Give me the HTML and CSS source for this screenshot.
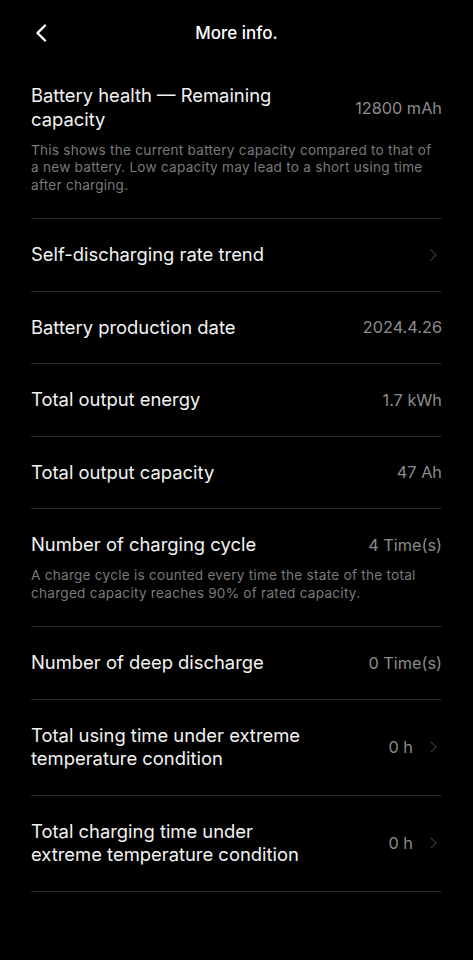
FILE: index.html
```html
<!DOCTYPE html>
<html lang="en">
<head>
    <meta charset="UTF-8">
    <meta name="viewport" content="width=device-width, initial-scale=1.0">
    <title>More info.</title>
    <link rel="stylesheet" href="styles.css">
</head>
<body>

<div class="page">
    <div class="header">
        <span class="back">
            <svg width="14" height="18" viewBox="0 0 14 18"><path d="M11 1.5 L3.5 9 L11 16.5" fill="none" stroke="#fff" stroke-width="2.4" stroke-linecap="round" stroke-linejoin="round"/></svg>
        </span>
        <h1>More info.</h1>
    </div>

    <div class="list">
        <div class="row">
            <div class="row-main">
                <div class="title short">Battery health — Remaining capacity</div>
                <div class="value">12800 mAh</div>
            </div>
            <p class="desc">This shows the current battery capacity compared to that of a new battery. Low capacity may lead to a short using time after charging.</p>
        </div>

        <div class="row">
            <div class="row-main">
                <div class="title">Self-discharging rate trend</div>
                <div class="value"><span class="chev"></span></div>
            </div>
        </div>

        <div class="row">
            <div class="row-main">
                <div class="title">Battery production date</div>
                <div class="value">2024.4.26</div>
            </div>
        </div>

        <div class="row">
            <div class="row-main">
                <div class="title">Total output energy</div>
                <div class="value">1.7 kWh</div>
            </div>
        </div>

        <div class="row">
            <div class="row-main">
                <div class="title">Total output capacity</div>
                <div class="value">47 Ah</div>
            </div>
        </div>

        <div class="row">
            <div class="row-main">
                <div class="title">Number of charging cycle</div>
                <div class="value">4 Time(s)</div>
            </div>
            <p class="desc">A charge cycle is counted every time the state of the total charged capacity reaches 90% of rated capacity.</p>
        </div>

        <div class="row">
            <div class="row-main">
                <div class="title">Number of deep discharge</div>
                <div class="value">0 Time(s)</div>
            </div>
        </div>

        <div class="row">
            <div class="row-main">
                <div class="title narrow">Total using time under extreme temperature condition</div>
                <div class="value">0 h <span class="chev"></span></div>
            </div>
        </div>

        <div class="row">
            <div class="row-main">
                <div class="title narrow">Total charging time under extreme temperature condition</div>
                <div class="value">0 h <span class="chev"></span></div>
            </div>
        </div>
    </div>
</div>

</body>
</html>
```

FILE: styles.css
```css
* {
    margin: 0;
    padding: 0;
    box-sizing: border-box;
}

body {
    font-family: Inter, 'Noto Sans', sans-serif;
    background-color: #000;
    color: #f2f2f2;
}

.page {
    width: 473px;
    min-height: 960px;
}

.header {
    height: 60px;
    display: flex;
    align-items: center;
    justify-content: center;
    position: relative;
    padding-top: 6px;
}

.header h1 {
    font-size: 17px;
    font-weight: 500;
    color: #fff;
}

.back {
    position: absolute;
    left: 34px;
    top: 24px;
    display: flex;
}

.list {
    padding: 0 31px;
}

.row {
    padding: 24px 0;
    border-bottom: 1px solid #262626;
}

.row-main {
    display: flex;
    align-items: center;
    justify-content: space-between;
    gap: 16px;
}

.title {
    font-size: 18.4px;
    line-height: 23.5px;
    color: #f2f2f2;
}

.title.short {
    max-width: 260px;
}

.title.narrow {
    max-width: 290px;
}

.value {
    font-size: 16.3px;
    color: #8c8c8c;
    white-space: nowrap;
    display: flex;
    align-items: center;
}

.chev {
    display: inline-block;
    width: 8px;
    height: 8px;
    border-top: 1.6px solid #3c3c3c;
    border-right: 1.6px solid #3c3c3c;
    transform: rotate(45deg);
    margin-left: 14px;
    margin-right: 7px;
}

.desc {
    margin-top: 10.5px;
    font-size: 13.6px;
    line-height: 17.5px;
    letter-spacing: 0.25px;
    color: #7a7a7a;
}
```
